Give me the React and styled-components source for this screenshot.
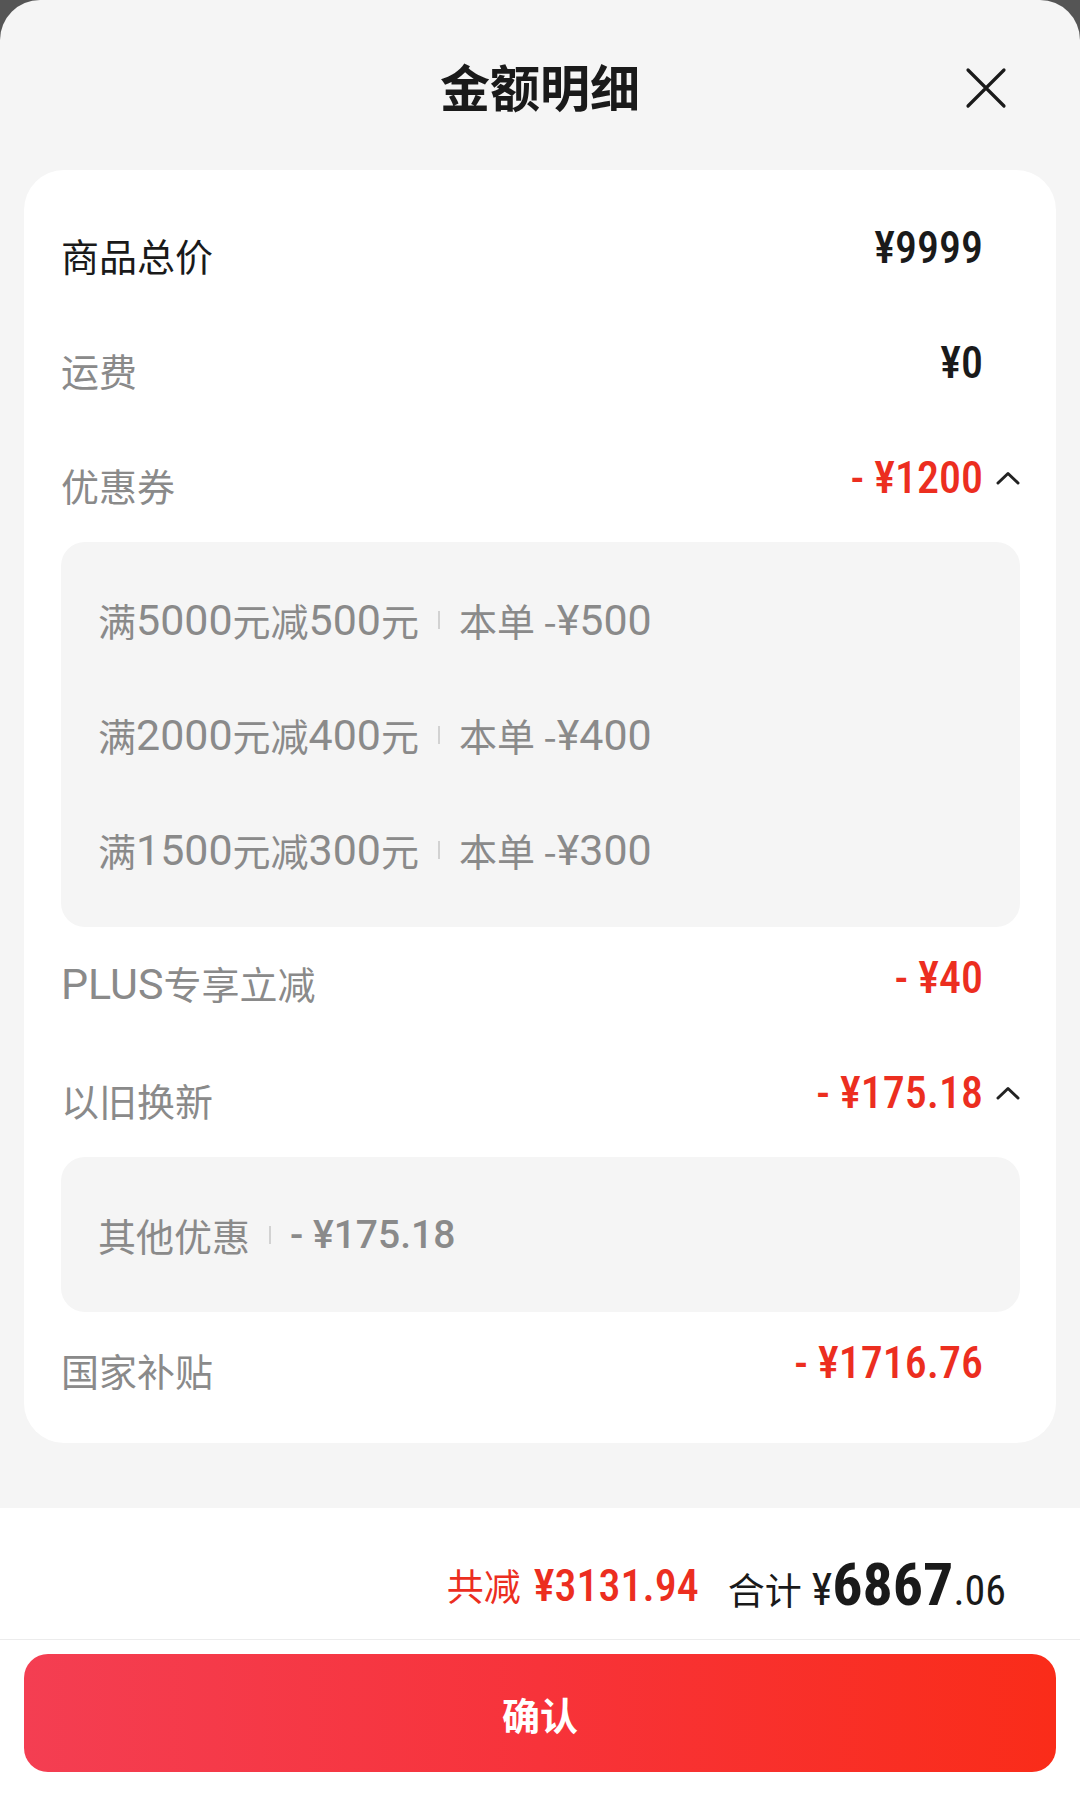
import React from "react";
import styled, { createGlobalStyle } from "styled-components";

const GlobalStyle = createGlobalStyle`
  html, body {
    margin: 0;
    padding: 0;
    background: #555555;
  }
  body {
    font-family: "Noto Sans CJK SC", "Noto Sans", sans-serif;
  }
`;

const RED = "#ec2e1f";
const GREY = "#8a8a8a";
const INK = "#1a1a1a";
const NUM_FONT = `"Roboto Condensed", "Liberation Sans Narrow", "Roboto", sans-serif`;

const Sheet = styled.div`
  width: 1080px;
  min-height: 1800px;
  background: #f5f5f5;
  border-radius: 40px 40px 0 0;
  display: flex;
  flex-direction: column;
`;

const Header = styled.header`
  height: 170px;
  box-sizing: border-box;
  padding-top: 60px;
  display: grid;
  grid-template-columns: 1fr auto 1fr;
  grid-template-rows: 50px;
  align-items: center;
`;

const Title = styled.h1`
  grid-column: 2;
  margin: 0;
  font-size: 50px;
  line-height: 50px;
  font-weight: 700;
  color: ${INK};
`;

const CloseButton = styled.button`
  grid-column: 3;
  justify-self: end;
  margin: 6px 72px 0 0;
  width: 44px;
  height: 44px;
  padding: 0;
  border: 0;
  background: none;
  display: flex;
`;

const Card = styled.section`
  margin: 0 24px;
  background: #ffffff;
  border-radius: 40px;
  padding: 27px 36px 16px 37px;
`;

const Row = styled.div`
  height: 115px;
  display: flex;
  justify-content: space-between;
  align-items: center;
`;

const Label = styled.span`
  font-size: 38px;
  line-height: 1;
  color: ${p => (p.$strong ? INK : GREY)};
`;

/* latin runs inside CJK text are drawn a size up, as on the device */
const Latin = styled.span`
  font-family: "Roboto", sans-serif;
  font-size: 1.13em;
`;

const ValueGroup = styled.div`
  display: flex;
  align-items: center;
  margin-bottom: 14px;
`;

const Amount = styled.span`
  font-family: ${NUM_FONT};
  font-weight: 500;
  font-size: 44px;
  line-height: 1;
  white-space: pre;
  color: ${p => (p.$red ? RED : INK)};
`;

const ChevronSlot = styled.span`
  width: 37px;
  display: flex;
  justify-content: flex-end;
`;

const DetailBox = styled.div`
  background: #f5f5f5;
  border-radius: 24px;
  padding: 20px 37px;
`;

const DetailLine = styled.div`
  height: 115px;
  display: flex;
  align-items: center;
  font-size: 38px;
  color: ${GREY};
  white-space: pre;
`;

const DetailAmount = styled.span`
  font-family: "Roboto", sans-serif;
  font-weight: 500;
  font-size: 39px;
`;

const Sep = styled.span`
  width: 2px;
  height: 18px;
  background: #d2d2d2;
  margin: 0 19px;
`;

const Footer = styled.footer`
  margin-top: 65px;
  flex: 1;
  background: #ffffff;
  display: flex;
  flex-direction: column;
`;

const Summary = styled.div`
  height: 132px;
  box-sizing: border-box;
  padding: 22px 74px 0 0;
  border-bottom: 1px solid #ececec;
  display: flex;
  justify-content: flex-end;
  align-items: center;
  gap: 29px;
`;

const SummaryPart = styled.div`
  display: flex;
  align-items: baseline;
  color: ${p => (p.$red ? RED : INK)};
`;

const SummaryLabel = styled.span`
  font-size: 37px;
  margin-right: ${p => p.$gap}px;
`;

const SummaryNum = styled.span`
  font-family: ${NUM_FONT};
  font-size: ${p => p.$size}px;
  font-weight: ${p => p.$weight || 400};
`;

const ConfirmButton = styled.button`
  margin: 14px 24px 26px;
  height: 118px;
  border: 0;
  border-radius: 24px;
  background: linear-gradient(90deg, #f43e52 0%, #f7333a 50%, #fa2c19 100%);
  color: #ffffff;
  font-family: "Noto Sans CJK SC", sans-serif;
  font-size: 38px;
  font-weight: 700;
`;

const CloseIcon = () => (
  <svg width="44" height="44" viewBox="0 0 44 44">
    <path d="M4 4 L40 40 M40 4 L4 40" stroke={INK} strokeWidth="3.2" strokeLinecap="round" fill="none" />
  </svg>
);

const ChevronUp = () => (
  <svg width="24" height="14" viewBox="0 0 24 14">
    <path d="M2 12 L12 2.5 L22 12" stroke="#222" strokeWidth="3" strokeLinecap="round" strokeLinejoin="round" fill="none" />
  </svg>
);

const mixed = text =>
  text
    .split(/([A-Za-z0-9¥.]+)/)
    .map((part, i) => (i % 2 ? <Latin key={i}>{part}</Latin> : part));

const rows = [
  { label: "商品总价", value: "¥9999", strong: true },
  { label: "运费", value: "¥0" },
  {
    label: "优惠券",
    value: "- ¥1200",
    red: true,
    open: true,
    details: [
      { name: "满5000元减500元", amount: "本单 -¥500" },
      { name: "满2000元减400元", amount: "本单 -¥400" },
      { name: "满1500元减300元", amount: "本单 -¥300" },
    ],
  },
  { label: "PLUS专享立减", value: "- ¥40", red: true },
  {
    label: "以旧换新",
    value: "- ¥175.18",
    red: true,
    open: true,
    details: [{ name: "其他优惠", amount: "- ¥175.18", plain: true }],
  },
  { label: "国家补贴", value: "- ¥1716.76", red: true },
];

export default function App() {
  return (
    <>
      <GlobalStyle />
      <Sheet>
        <Header>
          <Title>金额明细</Title>
          <CloseButton aria-label="关闭">
            <CloseIcon />
          </CloseButton>
        </Header>

        <Card>
          {rows.map(r => (
            <React.Fragment key={r.label}>
              <Row>
                <Label $strong={r.strong}>{mixed(r.label)}</Label>
                <ValueGroup>
                  <Amount $red={r.red}>{r.value}</Amount>
                  <ChevronSlot>{r.open && <ChevronUp />}</ChevronSlot>
                </ValueGroup>
              </Row>
              {r.details && (
                <DetailBox>
                  {r.details.map(d => (
                    <DetailLine key={d.name}>
                      {mixed(d.name)}
                      <Sep />
                      {d.plain ? <DetailAmount>{d.amount}</DetailAmount> : mixed(d.amount)}
                    </DetailLine>
                  ))}
                </DetailBox>
              )}
            </React.Fragment>
          ))}
        </Card>

        <Footer>
          <Summary>
            <SummaryPart $red>
              <SummaryLabel $gap={13}>共减</SummaryLabel>
              <SummaryNum $size={44} $weight={500}>¥3131.94</SummaryNum>
            </SummaryPart>
            <SummaryPart>
              <SummaryLabel $gap={10}>合计</SummaryLabel>
              <SummaryNum $size={44}>¥</SummaryNum>
              <SummaryNum $size={60} $weight={700}>6867</SummaryNum>
              <SummaryNum $size={42}>.06</SummaryNum>
            </SummaryPart>
          </Summary>
          <ConfirmButton>确认</ConfirmButton>
        </Footer>
      </Sheet>
    </>
  );
}
